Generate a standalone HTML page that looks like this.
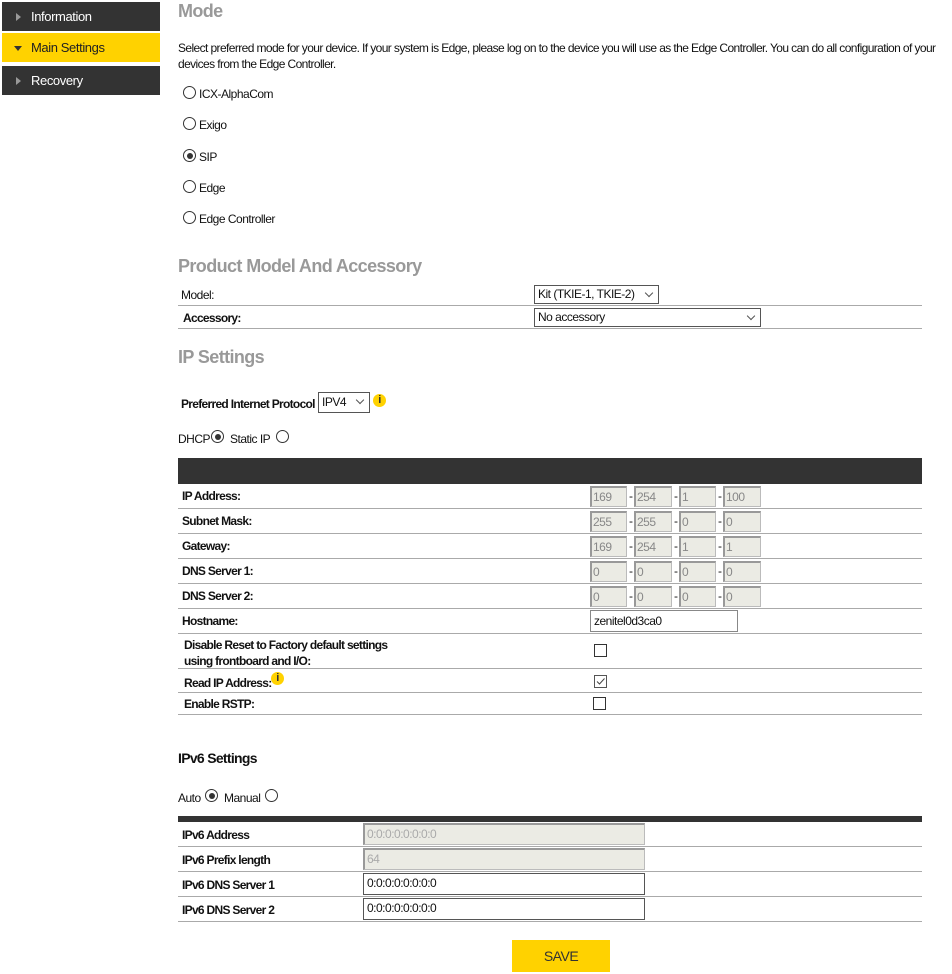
<!DOCTYPE html>
<html><head><meta charset="utf-8"><style>
*{box-sizing:border-box;margin:0;padding:0}
body{width:952px;height:974px;background:#fff;font-family:"Liberation Sans",sans-serif;font-size:12px;color:#111;position:relative;overflow:hidden;letter-spacing:-0.5px}
.a{position:absolute;white-space:nowrap}
.nav{position:absolute;left:2px;width:158px;height:29px;background:#333;color:#fff;font-size:13px;line-height:29px;padding-left:29px;letter-spacing:-0.4px}
.nav.y{background:#ffd200;color:#222}
.nav i{position:absolute;left:14px;top:11px;width:0;height:0;border-top:4px solid transparent;border-bottom:4px solid transparent;border-left:5px solid #999}
.nav.y i{left:12px;top:13px;border-left:4px solid transparent;border-right:4px solid transparent;border-top:5px solid #333;border-bottom:0}
.h{position:absolute;font-weight:bold;color:#999;font-size:18px;white-space:nowrap;letter-spacing:-0.6px}
.r{position:absolute;width:13px;height:13px;border:1px solid #333;border-radius:50%;background:#fff}
.r.c::after{content:"";position:absolute;left:2.5px;top:2.5px;width:6px;height:6px;border-radius:50%;background:#333}
.line{position:absolute;left:178px;width:744px;height:1px;background:#aaa}
.b{font-weight:bold;letter-spacing:-0.7px}
.in{position:absolute;height:21px;background:#ebebe4;border:1px solid #bbb;border-top:2px solid #999;border-left:2px solid #999;color:#888;font-size:12px;line-height:18px;padding-left:1px}
.dash{position:absolute;font-size:12px}
.sel{position:absolute;border:1px solid #555;height:19px;line-height:17px;padding-left:3px;background:#fff}
.sel::after{content:"";position:absolute;right:6px;top:4px;width:5px;height:5px;border-right:1px solid #555;border-bottom:1px solid #555;transform:rotate(45deg)}
.cb{position:absolute;width:13px;height:13px;border:1px solid #333;background:#fff}
.info{position:absolute;width:13px;height:13px;border-radius:50%;background:#ffd200;color:#333;font-weight:bold;font-size:11px;text-align:center;line-height:13px}
.wi{position:absolute;height:21px;border:1px solid #555;background:#fff;line-height:19px;padding-left:3px}
</style></head><body>
<div class="nav" style="top:2px"><i></i>Information</div>
<div class="nav y" style="top:33px"><i></i>Main Settings</div>
<div class="nav" style="top:66px"><i></i>Recovery</div>

<div class="h" style="left:178px;top:1px">Mode</div>
<div class="a" style="left:178px;top:40px;line-height:16px;letter-spacing:-0.6px">Select preferred mode for your device. If your system is Edge, please log on to the device you will use as the Edge Controller. You can do all configuration of your<br>devices from the Edge Controller.</div>

<div class="r" style="left:183px;top:86px"></div><div class="a" style="left:199px;top:87px">ICX-AlphaCom</div>
<div class="r" style="left:183px;top:117px"></div><div class="a" style="left:199px;top:118px">Exigo</div>
<div class="r c" style="left:183px;top:149px"></div><div class="a" style="left:199px;top:150px">SIP</div>
<div class="r" style="left:183px;top:180px"></div><div class="a" style="left:199px;top:181px">Edge</div>
<div class="r" style="left:183px;top:211px"></div><div class="a" style="left:199px;top:212px">Edge Controller</div>

<div class="h" style="left:178px;top:256px">Product Model And Accessory</div>
<div class="a" style="left:181px;top:288px">Model:</div>
<div class="sel" style="left:534px;top:285px;width:125px">Kit (TKIE-1, TKIE-2)</div>
<div class="line" style="top:305px"></div>
<div class="a b" style="left:183px;top:311px">Accessory:</div>
<div class="sel" style="left:534px;top:308px;width:227px">No accessory</div>
<div class="line" style="top:328px"></div>

<div class="h" style="left:178px;top:347px">IP Settings</div>
<div class="a b" style="left:181px;top:397px">Preferred Internet Protocol</div>
<div class="sel" style="left:318px;top:392px;width:52px;height:21px;line-height:19px">IPV4</div>
<div class="info" style="left:373px;top:394px">i</div>
<div class="a" style="left:178px;top:432px">DHCP</div><div class="r c" style="left:211px;top:430px"></div>
<div class="a" style="left:230px;top:432px">Static IP</div><div class="r" style="left:276px;top:430px"></div>

<div class="a" style="left:178px;top:458px;width:744px;height:26px;background:#333"></div>

<div class="a b" style="left:182px;top:489px">IP Address:</div>
<div class="a b" style="left:182px;top:514px">Subnet Mask:</div>
<div class="a b" style="left:182px;top:539px">Gateway:</div>
<div class="a b" style="left:182px;top:564px">DNS Server 1:</div>
<div class="a b" style="left:182px;top:589px">DNS Server 2:</div>
<div class="a b" style="left:182px;top:614px">Hostname:</div>
<div class="a b" style="left:184px;top:637px;line-height:16px">Disable Reset to Factory default settings<br>using frontboard and I/O:</div>
<div class="a b" style="left:184px;top:676px">Read IP Address:</div><div class="info" style="left:271px;top:672px">i</div>
<div class="a b" style="left:184px;top:697px">Enable RSTP:</div>
<div class="line" style="top:508px"></div><div class="line" style="top:533px"></div><div class="line" style="top:558px"></div><div class="line" style="top:583px"></div><div class="line" style="top:608px"></div><div class="line" style="top:633px"></div><div class="line" style="top:668px"></div><div class="line" style="top:692px"></div><div class="line" style="top:714px"></div>

<div class="in" style="left:590px;top:486px;width:37px">169</div><div class="dash" style="left:629px;top:489px">-</div>
<div class="in" style="left:634px;top:486px;width:38px">254</div><div class="dash" style="left:674px;top:489px">-</div>
<div class="in" style="left:679px;top:486px;width:37px">1</div><div class="dash" style="left:718px;top:489px">-</div>
<div class="in" style="left:723px;top:486px;width:38px">100</div>

<div class="in" style="left:590px;top:511px;width:37px">255</div><div class="dash" style="left:629px;top:514px">-</div>
<div class="in" style="left:634px;top:511px;width:38px">255</div><div class="dash" style="left:674px;top:514px">-</div>
<div class="in" style="left:679px;top:511px;width:37px">0</div><div class="dash" style="left:718px;top:514px">-</div>
<div class="in" style="left:723px;top:511px;width:38px">0</div>

<div class="in" style="left:590px;top:536px;width:37px">169</div><div class="dash" style="left:629px;top:539px">-</div>
<div class="in" style="left:634px;top:536px;width:38px">254</div><div class="dash" style="left:674px;top:539px">-</div>
<div class="in" style="left:679px;top:536px;width:37px">1</div><div class="dash" style="left:718px;top:539px">-</div>
<div class="in" style="left:723px;top:536px;width:38px">1</div>

<div class="in" style="left:590px;top:561px;width:37px">0</div><div class="dash" style="left:629px;top:564px">-</div>
<div class="in" style="left:634px;top:561px;width:38px">0</div><div class="dash" style="left:674px;top:564px">-</div>
<div class="in" style="left:679px;top:561px;width:37px">0</div><div class="dash" style="left:718px;top:564px">-</div>
<div class="in" style="left:723px;top:561px;width:38px">0</div>

<div class="in" style="left:590px;top:586px;width:37px">0</div><div class="dash" style="left:629px;top:589px">-</div>
<div class="in" style="left:634px;top:586px;width:38px">0</div><div class="dash" style="left:674px;top:589px">-</div>
<div class="in" style="left:679px;top:586px;width:37px">0</div><div class="dash" style="left:718px;top:589px">-</div>
<div class="in" style="left:723px;top:586px;width:38px">0</div>

<div class="a" style="left:590px;top:610px;width:148px;height:22px;border:1px solid #888;line-height:20px;padding-left:3px">zenitel0d3ca0</div>
<div class="cb" style="left:594px;top:644px"></div>
<div class="cb" style="left:594px;top:675px;border-color:#555"><svg width="11" height="11" style="position:absolute;left:0;top:0"><path d="M2 5.5 L4.5 8 L9.5 2.5" fill="none" stroke="#444" stroke-width="1"/></svg></div>
<div class="cb" style="left:593px;top:697px"></div>

<div class="a b" style="left:178px;top:750px;font-size:14px">IPv6 Settings</div>
<div class="a" style="left:178px;top:791px">Auto</div><div class="r c" style="left:205px;top:789px"></div>
<div class="a" style="left:224px;top:791px">Manual</div><div class="r" style="left:265px;top:789px"></div>
<div class="a" style="left:178px;top:816px;width:744px;height:6px;background:#333"></div>
<div class="a b" style="left:182px;top:828px">IPv6 Address</div>
<div class="a b" style="left:182px;top:853px">IPv6 Prefix length</div>
<div class="a b" style="left:182px;top:878px">IPv6 DNS Server 1</div>
<div class="a b" style="left:182px;top:903px">IPv6 DNS Server 2</div>
<div class="line" style="top:846px"></div><div class="line" style="top:871px"></div><div class="line" style="top:896px"></div><div class="line" style="top:921px"></div>
<div class="in" style="left:363px;top:823px;width:282px;height:22px;padding-left:2px;color:#aaa">0:0:0:0:0:0:0:0</div>
<div class="in" style="left:363px;top:848px;width:282px;height:22px;padding-left:2px;color:#aaa">64</div>
<div class="wi" style="left:363px;top:873px;width:282px;height:22px">0:0:0:0:0:0:0:0</div>
<div class="wi" style="left:363px;top:898px;width:282px;height:22px">0:0:0:0:0:0:0:0</div>

<div class="a" style="left:512px;top:940px;width:98px;height:32px;background:#ffd200;text-align:center;line-height:32px;font-size:14px;color:#333">SAVE</div>
</body></html>
